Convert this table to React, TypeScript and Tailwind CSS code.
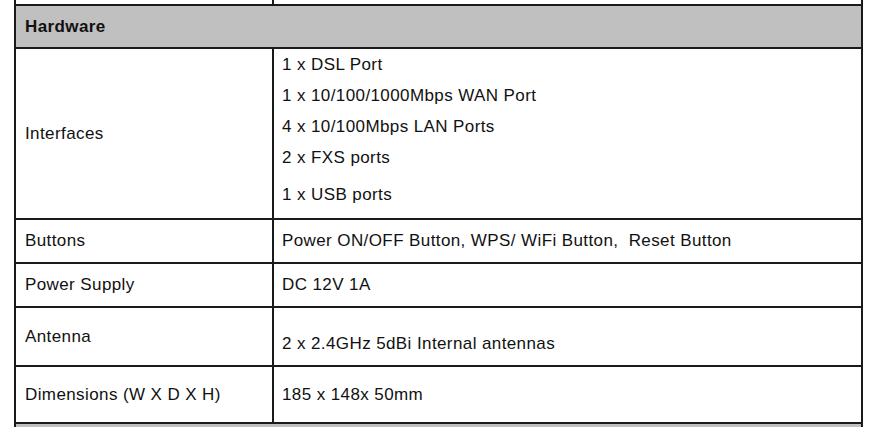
import React from 'react';

type SpecRow = {
  label: string;
  values: string[];
  height: string;
  valueClass?: string;
};

const rows: SpecRow[] = [
  {
    label: 'Buttons',
    values: ['Power ON/OFF Button, WPS/ WiFi Button,\u00a0 Reset Button'],
    height: 'h-[44px]',
  },
  { label: 'Power Supply', values: ['DC 12V 1A'], height: 'h-[44px]' },
  {
    label: 'Antenna',
    values: ['2 x 2.4GHz 5dBi Internal antennas'],
    height: 'h-[59px]',
    valueClass: 'pt-[14px]',
  },
  {
    label: 'Dimensions (W X D X H)',
    values: ['185 x 148x 50mm'],
    height: 'h-[57px]',
  },
];

const interfaces = [
  '1 x DSL Port',
  '1 x 10/100/1000Mbps WAN Port',
  '4 x 10/100Mbps LAN Ports',
  '2 x FXS ports',
];

const App: React.FC = () => {
  return (
    <div className="w-[878px] h-[427px] overflow-hidden bg-white font-['Liberation_Sans',Arial,sans-serif] text-[17px] tracking-[0.4px] text-[#111]">
      <div className="ml-[14px] w-[849px] border-x-2 border-[#1a1a1a]">
        {/* end of the table above */}
        <div className="flex h-[4px]">
          <div className="w-[258px] border-r-2 border-[#1a1a1a]" />
        </div>

        <div className="flex h-[45px] items-center border-y-2 border-[#1a1a1a] bg-[#c0c0c0] pl-[9px] font-bold">
          Hardware
        </div>

        <div className="flex h-[171px] border-b-2 border-[#1a1a1a]">
          <div className="flex w-[258px] items-center border-r-2 border-[#1a1a1a] pl-[9px]">
            Interfaces
          </div>
          <div className="flex flex-1 flex-col pl-[8px]">
            {interfaces.map((item) => (
              <div key={item} className="flex h-[31px] items-center">
                {item}
              </div>
            ))}
            <div className="mt-[6px] flex h-[31px] items-center">
              1 x USB ports
            </div>
          </div>
        </div>

        {rows.map((row) => (
          <div
            key={row.label}
            className={`flex ${row.height} border-b-2 border-[#1a1a1a]`}
          >
            <div className="flex w-[258px] items-center border-r-2 border-[#1a1a1a] pl-[9px]">
              {row.label}
            </div>
            <div
              className={`flex flex-1 items-center pl-[8px] ${row.valueClass ?? ''}`}
            >
              {row.values[0]}
            </div>
          </div>
        ))}

        {/* start of the next section */}
        <div className="h-[10px] bg-[#c0c0c0]" />
      </div>
    </div>
  );
};

export default App;
